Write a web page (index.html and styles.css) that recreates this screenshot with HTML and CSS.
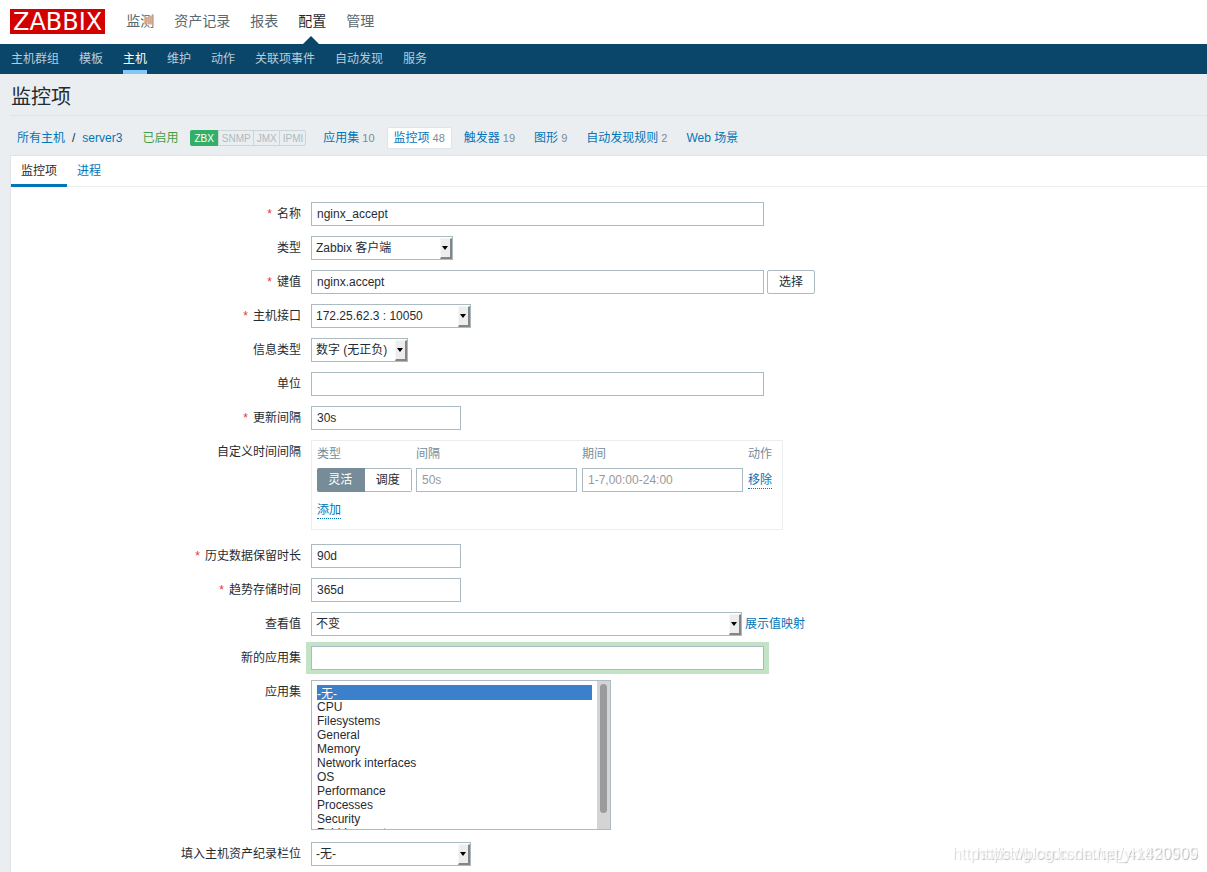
FILE: index.html
```html
<!DOCTYPE html>
<html lang="zh-CN">
<head>
<meta charset="utf-8">
<title>监控项</title>
<link rel="stylesheet" href="styles.css">
</head>
<body>
<header class="top">
  <a class="logo" href="#">ZABBIX</a>
  <nav class="main-nav">
    <a href="#">监测</a><a href="#">资产记录</a><a href="#">报表</a><a class="current" href="#">配置</a><a href="#">管理</a>
  </nav>
</header>
<nav class="sub-nav">
  <a href="#">主机群组</a><a href="#">模板</a><a class="current" href="#">主机</a><a href="#">维护</a><a href="#">动作</a><a href="#">关联项事件</a><a href="#">自动发现</a><a href="#">服务</a>
</nav>
<main class="page">
  <h1 class="title">监控项</h1>
  <div class="crumbs">
    <div class="path"><a href="#">所有主机</a><span>/</span><a href="#">server3</a></div>
    <span class="enabled">已启用</span>
    <div class="badges"><span class="on">ZBX</span><span>SNMP</span><span>JMX</span><span>IPMI</span></div>
    <div class="links">
      <span class="link"><a href="#">应用集</a><sup>10</sup></span>
      <span class="link active"><a href="#">监控项</a><sup>48</sup></span>
      <span class="link"><a href="#">触发器</a><sup>19</sup></span>
      <span class="link"><a href="#">图形</a><sup>9</sup></span>
      <span class="link"><a href="#">自动发现规则</a><sup>2</sup></span>
      <span class="link"><a href="#">Web 场景</a></span>
    </div>
  </div>
  <section class="panel">
    <div class="tabs"><a class="current" href="#">监控项</a><a href="#">进程</a></div>
    <form class="form">
      <label class="required" for="name">名称</label>
      <div class="field"><input class="text wide" id="name" type="text" value="nginx_accept"></div>

      <label for="type">类型</label>
      <div class="field"><span class="select w-type"><select id="type"><option>Zabbix 客户端</option></select><span class="arrow"></span></span></div>

      <label class="required" for="key">键值</label>
      <div class="field"><input class="text wide" id="key" type="text" value="nginx.accept"><button class="button" type="button">选择</button></div>

      <label class="required" for="interface">主机接口</label>
      <div class="field"><span class="select w-medium"><select id="interface"><option>172.25.62.3 : 10050</option></select><span class="arrow"></span></span></div>

      <label for="value-type">信息类型</label>
      <div class="field"><span class="select w-small"><select id="value-type"><option>数字 (无正负)</option></select><span class="arrow"></span></span></div>

      <label for="units">单位</label>
      <div class="field"><input class="text wide" id="units" type="text"></div>

      <label class="required" for="delay">更新间隔</label>
      <div class="field"><input class="text short" id="delay" type="text" value="30s"></div>

      <span class="label">自定义时间间隔</span>
      <div class="field">
        <div class="intervals">
          <table>
            <thead><tr><th>类型</th><th>间隔</th><th>期间</th><th>动作</th></tr></thead>
            <tbody>
              <tr>
                <td><div class="segments">
                  <input type="radio" name="kind" id="flexible" checked><label for="flexible">灵活</label>
                  <input type="radio" name="kind" id="scheduling"><label for="scheduling">调度</label>
                </div></td>
                <td><input class="text cell" type="text" placeholder="50s" aria-label="间隔"></td>
                <td><input class="text cell" type="text" placeholder="1-7,00:00-24:00" aria-label="期间"></td>
                <td><button class="link-button" type="button">移除</button></td>
              </tr>
              <tr><td colspan="4" class="add"><button class="link-button" type="button">添加</button></td></tr>
            </tbody>
          </table>
        </div>
      </div>

      <label class="required" for="history">历史数据保留时长</label>
      <div class="field"><input class="text short" id="history" type="text" value="90d"></div>

      <label class="required" for="trends">趋势存储时间</label>
      <div class="field"><input class="text short" id="trends" type="text" value="365d"></div>

      <label for="valuemap">查看值</label>
      <div class="field"><span class="select w-large"><select id="valuemap"><option>不变</option></select><span class="arrow"></span></span><a href="#">展示值映射</a></div>

      <label for="new-app">新的应用集</label>
      <div class="field"><input class="text wide focused" id="new-app" type="text"></div>

      <label for="apps">应用集</label>
      <div class="field">
        <div class="list">
          <select id="apps" multiple size="10">
            <option selected>-无-</option><option>CPU</option><option>Filesystems</option><option>General</option><option>Memory</option><option>Network interfaces</option><option>OS</option><option>Performance</option><option>Processes</option><option>Security</option><option>Zabbix agent</option>
          </select>
          <div class="track"><div class="thumb"></div></div>
        </div>
      </div>

      <label for="inventory">填入主机资产纪录栏位</label>
      <div class="field"><span class="select w-medium"><select id="inventory"><option>-无-</option></select><span class="arrow"></span></span></div>
    </form>
  </section>
</main>
<div class="watermark"><span>https://blog.csdn.net/qq_41830505</span><span>https://blog.csdn.net/yrx420909</span></div>
</body>
</html>
```
FILE: styles.css
```css
* { box-sizing: border-box; }

body {
  margin: 0;
  min-height: 100vh;
  display: flex;
  flex-direction: column;
  background: #ebeef0;
  color: #1f2c33;
  font: 12px/16px "Liberation Sans", "Noto Sans CJK SC", sans-serif;
}

a { color: #0275b8; text-decoration: none; }

input, select, button { font: inherit; color: inherit; margin: 0; }

.top {
  display: flex;
  align-items: center;
  height: 44px;
  padding: 0 10px 1px;
  gap: 21px;
  background: #fff;
}

.logo {
  height: 25px;
  padding: 0 3px;
  background: #d40000;
  color: #fff;
  font: 24px/26px "DejaVu Sans", sans-serif;
}

.main-nav { display: flex; gap: 20px; height: 43px; }

.main-nav a {
  position: relative;
  color: #5a6870;
  font-size: 14px;
  line-height: 42px;
}

.main-nav .current { color: #1f2c33; }

.main-nav .current::after {
  content: "";
  position: absolute;
  left: 50%;
  bottom: -1px;
  margin-left: -9px;
  border: 8px solid transparent;
  border-top: 0;
  border-bottom-color: #0a466a;
}

.sub-nav {
  display: flex;
  gap: 20px;
  height: 30px;
  padding: 0 11px;
  background: #0a466a;
}

.sub-nav a { color: #b9cdd9; line-height: 30px; }

.sub-nav .current { color: #fff; border-bottom: 4px solid #81c8f6; }

.page {
  flex: 1;
  display: flex;
  flex-direction: column;
  padding-left: 10px;
}

.title {
  margin: 0;
  padding: 10px 1px 5px;
  border-bottom: 1px solid #dfe4e7;
  font-size: 20px;
  font-weight: normal;
  line-height: 26px;
}

.crumbs {
  display: flex;
  align-items: center;
  height: 39px;
  padding: 5px 7px 0;
}

.path { display: flex; gap: 7px; margin-right: 20px; }

.enabled { color: #429e47; margin-right: 12px; }

.badges {
  display: flex;
  margin-right: 10px;
  border: 1px solid #ccd5d9;
  border-radius: 2px;
  color: #acbbc2;
  font-size: 10px;
}

.badges span { padding: 0 2px 0 3px; height: 14px; line-height: 16px; }

.badges span + span { border-left: 1px solid #ccd5d9; }

.badges .on {
  margin: -1px 0 -1px -1px;
  padding: 1px 4px 0;
  height: 16px;
  background: #34af67;
  color: #fff;
  border-radius: 2px 0 0 2px;
}

.links { display: flex; gap: 5px; }

.link {
  display: flex;
  gap: 3px;
  height: 22px;
  padding: 0 6px;
  border: 1px solid transparent;
  border-radius: 2px;
  line-height: 20px;
}

.link.active { background: #fff; border-color: #dfe4e7; }

.link sup { color: #768d99; font-size: 11px; line-height: 21px; vertical-align: baseline; }

.panel {
  flex: 1;
  background: #fff;
  border: 1px solid #dfe4e7;
  border-width: 1px 0 0 1px;
}

.tabs {
  display: flex;
  height: 31px;
  border-bottom: 1px solid #ebeef0;
}

.tabs a { padding: 0 10px; height: 31px; line-height: 30px; }

.tabs .current { color: #1f2c33; border-bottom: 3px solid #0275b8; }

.form {
  display: grid;
  grid-template-columns: 290px 1fr;
  gap: 10px;
  padding: 15px 0 6px;
}

.form > label, .label { text-align: right; line-height: 24px; }

.required::before { content: "*"; color: #e33734; margin-right: 5px; }

.field { display: flex; align-items: center; gap: 3px; min-width: 0; }

.text {
  height: 24px;
  padding: 0 5px;
  border: 1px solid #acbbc2;
  background: #fff;
  outline: 0;
}

.text::placeholder { color: #999; }

.wide { width: 453px; }
.short { width: 150px; }
.cell { display: block; width: 161px; }

.focused { box-shadow: 0 0 0 4px #c3e3c6, -1px 0 0 4px #c3e3c6, 1px 0 0 4px #c3e3c6; }

.button {
  width: 48px;
  height: 24px;
  padding: 0;
  border: 1px solid #acbbc2;
  border-radius: 2px;
  background: #fff;
}

.select { position: relative; height: 24px; }

.select select {
  display: block;
  width: 100%;
  height: 24px;
  padding: 0 16px 0 4px;
  border: 1px solid #acbbc2;
  border-radius: 0;
  background: #fff;
  appearance: none;
}

.arrow {
  position: absolute;
  top: 2px;
  right: 1px;
  width: 12px;
  height: 21px;
  border: 1px solid #f6f6f6;
  border-right: 2px solid #858585;
  border-bottom: 2px solid #858585;
  background: #ededed;
  pointer-events: none;
}

.arrow::after {
  content: "";
  position: absolute;
  top: 7px;
  left: 1px;
  border: 3px solid transparent;
  border-width: 4px 3px 0;
  border-top-color: #000;
}

.w-type { width: 142px; }
.w-medium { width: 160px; }
.w-small { width: 97px; }
.w-large { width: 431px; }

.intervals {
  margin-bottom: 4px;
  padding: 4px 10px 9px 5px;
  border: 1px solid #ebeef0;
}

.intervals table { border-collapse: collapse; }

.intervals th {
  height: 23px;
  padding: 1px 5px 6px 0;
  color: #768d99;
  font-weight: normal;
  text-align: left;
}

.intervals td { padding: 0 4px 0 0; }

.intervals td:nth-child(2) { padding-right: 5px; }

.intervals th:last-child, .intervals td:last-child { padding-right: 0; padding-left: 1px; }

.intervals td.add:last-child { height: 28px; padding: 10px 0 0; vertical-align: top; }

.segments { display: flex; width: 95px; }

.segments input { position: absolute; opacity: 0; }

.segments label {
  flex: 1;
  height: 24px;
  border: 1px solid #acbbc2;
  border-left: 0;
  border-radius: 0 2px 2px 0;
  line-height: 22px;
  text-align: center;
}

.segments :checked + label {
  background: #768d99;
  border-color: #768d99;
  border-radius: 2px 0 0 2px;
  color: #fff;
}

.link-button {
  display: block;
  padding: 0;
  border: 0;
  border-bottom: 1px dotted #0275b8;
  background: none;
  color: #0275b8;
  line-height: 16px;
}

.list {
  display: flex;
  width: 300px;
  height: 150px;
  margin-bottom: 2px;
  border: 1px solid #acbbc2;
}

.list select {
  flex: 1;
  min-width: 0;
  height: 148px;
  padding: 4px 5px 0;
  border: 0;
  background: #fff;
  outline: 0;
  overflow: hidden;
}

.list option { height: 14px; min-height: 14px; padding: 0; line-height: 14px; }

.list option:checked {
  display: flex;
  align-items: center;
  height: 15px;
  background: linear-gradient(#3a80cb, #3a80cb);
  color: #fff;
}

.track { width: 13px; padding: 3px 3px 0; background: #d4d4d4; }

.thumb { width: 7px; height: 129px; border-radius: 4px; background: #999b9c; }

.watermark {
  position: fixed;
  right: 9px;
  bottom: 8px;
  display: grid;
  justify-items: end;
  color: rgba(255, 255, 255, 0.7);
  font-size: 16px;
  line-height: 20px;
  text-shadow: 1px 1px 1px rgba(0, 0, 0, 0.16);
  pointer-events: none;
}

.watermark span { grid-area: 1 / 1; }
```
